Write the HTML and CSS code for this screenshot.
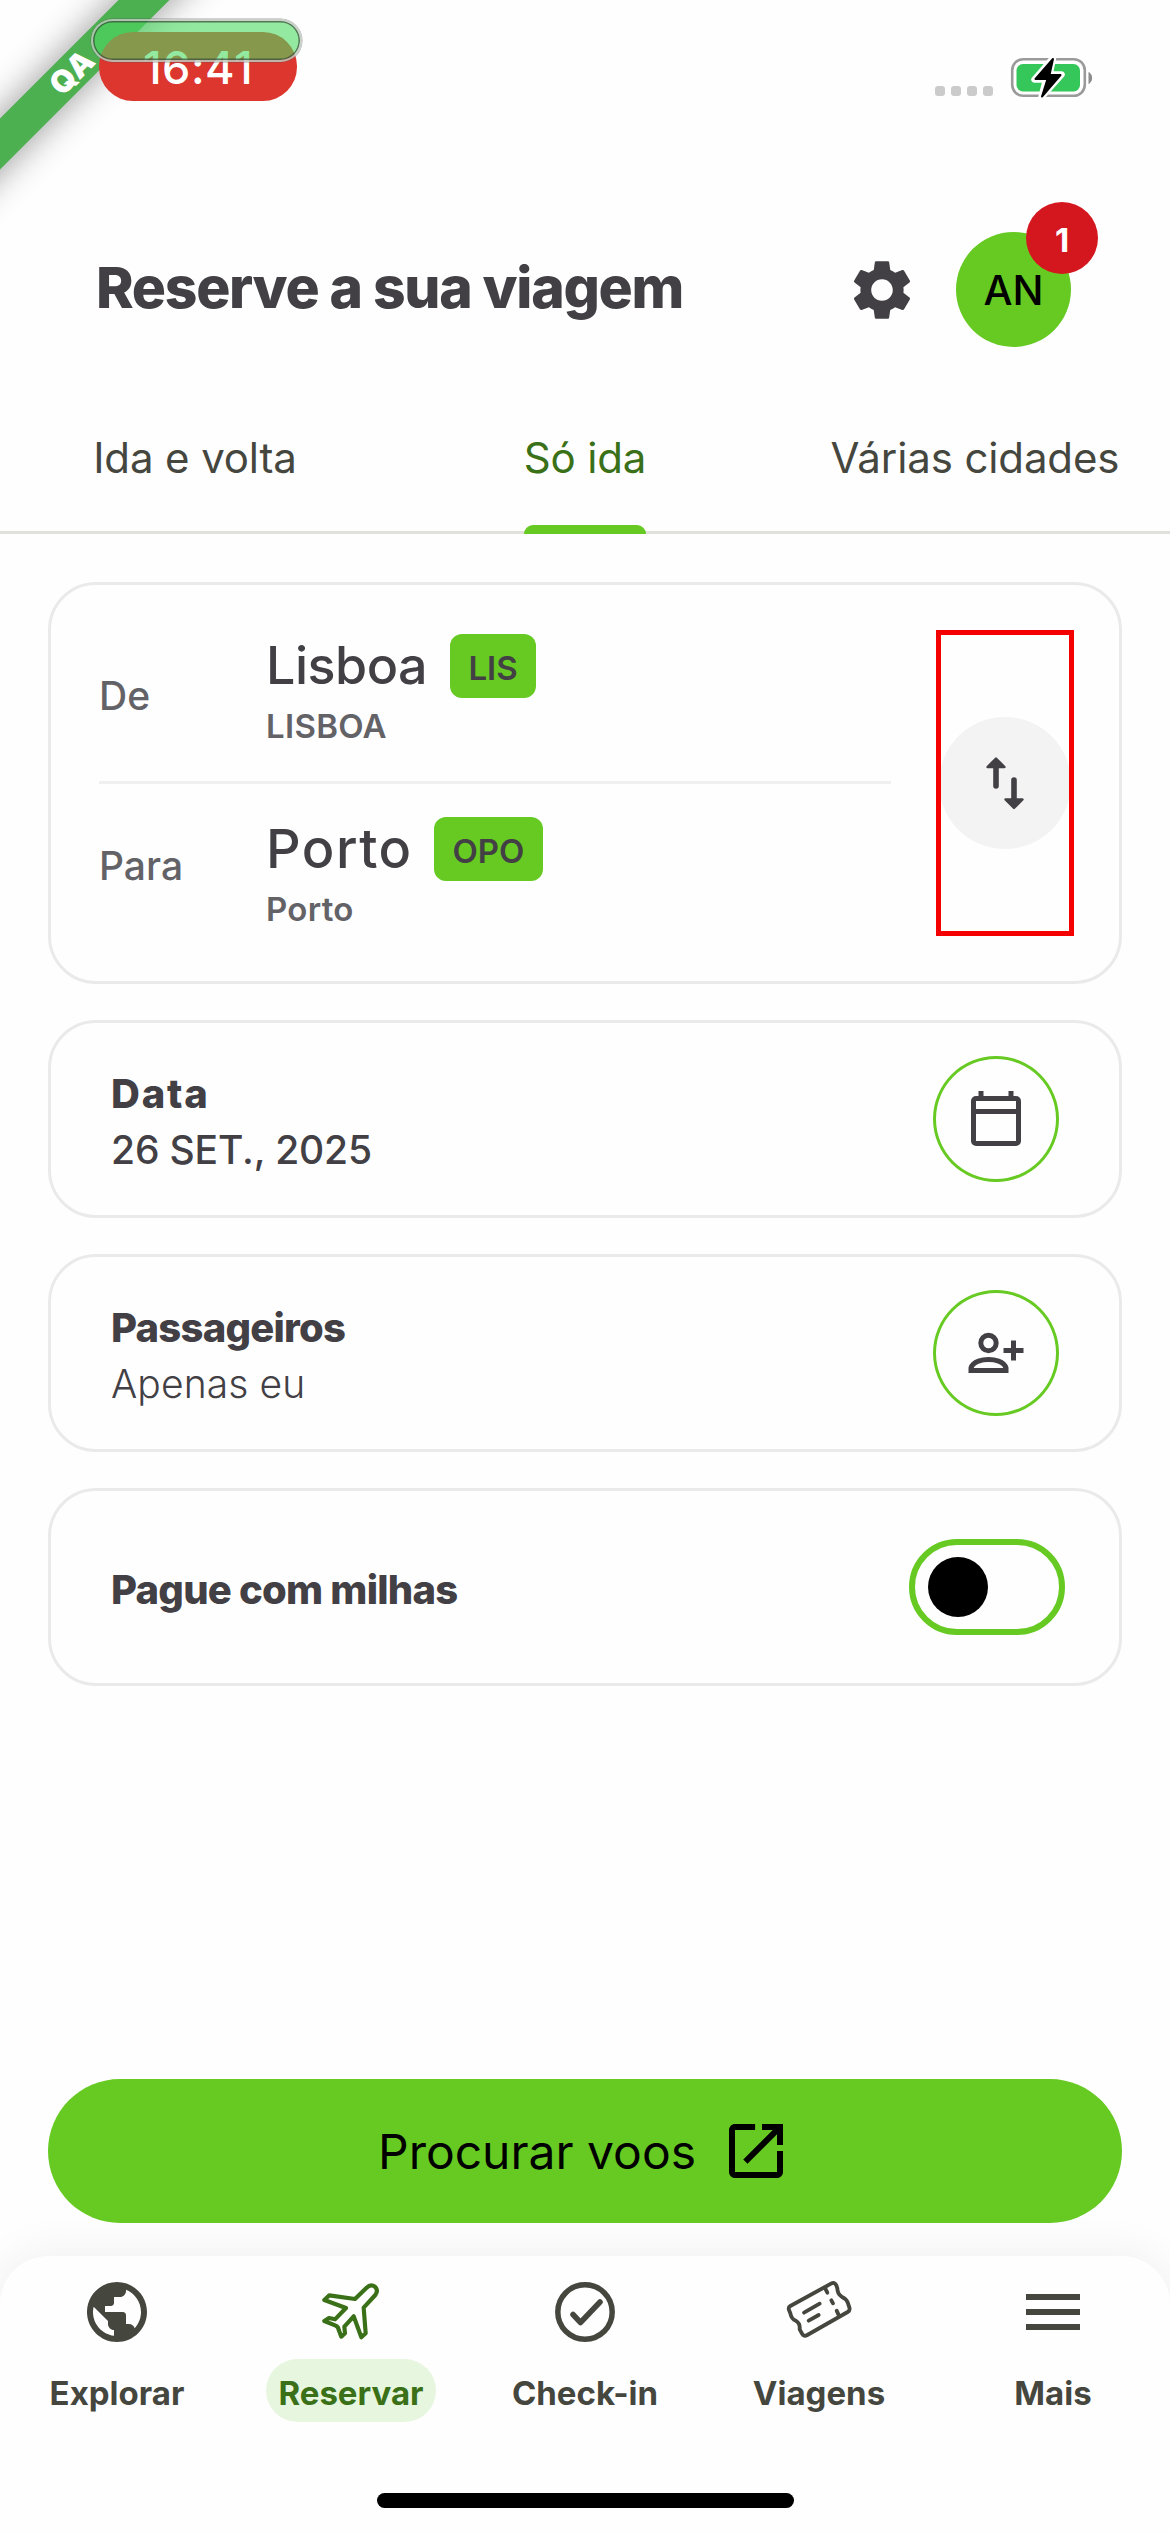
FILE: index.html
```html
<!DOCTYPE html>
<html lang="pt">
<head>
<meta charset="utf-8">
<title>Reserve a sua viagem</title>
<link rel="stylesheet" href="styles.css">
</head>
<body>
<div class="screen">
  <div class="ribbon">QA</div>

  <div class="status-bar">
    <div class="time-pill">16:41</div>
    <div class="glass-pill"></div>
    <div class="status-icons">
      <div class="dots"><i></i><i></i><i></i><i></i></div>
      <svg class="battery" width="84" height="44" viewBox="0 0 84 44">
        <rect x="2.2" y="4.2" width="72.6" height="36.6" rx="11" fill="none" stroke="#9a9a9a" stroke-width="2.6"/>
        <path d="M79 17.5a7 7 0 0 1 0 11z" fill="#8a8a8a" stroke="#8a8a8a"/>
        <rect x="6.5" y="9" width="63.5" height="27.5" rx="6.5" fill="#35c759"/>
        <path d="M43 3 24.500 24.500h11.500L31.500 42 51.500 19.500H39.500z" fill="#000" stroke="#fff" stroke-width="6.500" stroke-linejoin="round"/>
        <path d="M43 4 25.500 24h12L32 41.500 50.500 20H39.500z" fill="#000" stroke="#000" stroke-width="2" stroke-linejoin="round"/>
      </svg>
    </div>
  </div>

  <header class="header">
    <h1 class="title">Reserve a sua viagem</h1>
    <svg class="gear" width="72" height="72" viewBox="0 0 24 24"><path fill="#424045" d="M19.14 12.94c.04-.3.06-.61.06-.94 0-.32-.02-.64-.07-.94l2.030-1.580c.18-.14.23-.41.12-.61l-1.920-3.320c-.12-.22-.37-.29-.59-.22l-2.390.96c-.5-.38-1.030-.7-1.620-.94l-.36-2.540c-.04-.24-.24-.41-.48-.41h-3.840c-.24 0-.43.17-.47.41l-.36 2.540c-.59.24-1.130.57-1.620.94l-2.390-.96c-.22-.08-.47 0-.59.22L2.740 8.870c-.12.21-.08.47.12.61l2.030 1.580c-.05.3-.09.63-.09.94s.02.64.07.94l-2.030 1.580c-.18.14-.23.41-.12.61l1.920 3.320c.12.22.37.29.59.22l2.390-.96c.5.38 1.030.7 1.620.94l.36 2.540c.05.24.24.41.48.41h3.840c.24 0 .44-.17.47-.41l.36-2.540c.59-.24 1.130-.56 1.620-.94l2.390.96c.22.08.47 0 .59-.22l1.920-3.320c.12-.22.07-.47-.12-.61l-2.010-1.580zM12 15.600c-1.980 0-3.600-1.620-3.600-3.600s1.620-3.600 3.600-3.600 3.600 1.620 3.600 3.600-1.620 3.600-3.600 3.600z"/></svg>
    <div class="avatar">AN<span class="badge">1</span></div>
  </header>

  <nav class="tabs">
    <div class="tab">Ida e volta</div>
    <div class="tab active"><span>Só ida</span></div>
    <div class="tab">Várias cidades</div>
  </nav>

  <main class="content">
    <section class="card route">
      <div class="stops">
        <div class="stop from">
          <span class="label">De</span>
          <div class="place">
            <div class="city"><b class="lisboa">Lisboa</b><span class="code">LIS</span></div>
            <div class="airport">LISBOA</div>
          </div>
        </div>
        <div class="stop to">
          <span class="label">Para</span>
          <div class="place">
            <div class="city"><b class="porto">Porto</b><span class="code">OPO</span></div>
            <div class="airport">Porto</div>
          </div>
        </div>
      </div>
      <div class="swap">
        <svg width="132" height="132" viewBox="0 0 132 132">
          <circle cx="66" cy="66" r="66" fill="#f3f3f3"/>
          <g fill="#424045" stroke="#424045" stroke-linecap="round" stroke-linejoin="round">
            <path d="M57 48v21M75 63v21" stroke-width="5.600"/>
            <path d="M57 41.500l8.500 8.500h-17zM75 91l8.500-8.500h-17z" stroke-width="2.400"/>
          </g>
        </svg>
      </div>
    </section>

    <section class="card row">
      <div class="text"><div class="name data">Data</div><div class="value">26 SET., 2025</div></div>
      <div class="round">
        <svg width="126" height="126" viewBox="0 0 126 126"><g fill="none" stroke="#424045" stroke-width="5"><rect x="40.500" y="42.500" width="45" height="45" rx="2.500"/><path d="M40.500 55.500h45M48 35v6M78 35v6"/></g></svg>
      </div>
    </section>

    <section class="card row">
      <div class="text"><div class="name">Passageiros</div><div class="value light">Apenas eu</div></div>
      <div class="round">
        <svg width="126" height="126" viewBox="0 0 126 126"><g fill="none" stroke="#424045" stroke-width="5"><circle cx="55.500" cy="53" r="7.700"/><path d="M38 80.500V78C40 71 50 69.500 55.500 69.500S71 71 73 78v2.500zM80.500 50.500v20M70.500 60.500h20"/></g></svg>
      </div>
    </section>

    <section class="card row">
      <div class="text single"><div class="name">Pague com milhas</div></div>
      <div class="toggle"><div class="knob"></div></div>
    </section>
  </main>

  <button class="search">Procurar voos
    <svg width="72" height="72" viewBox="0 0 24 24"><path d="M19 19H5V5h6.700V3H5c-1.100 0-2 .9-2 2v14c0 1.100.9 2 2 2h14c1.100 0 2-.9 2-2v-7h-2v7zM14 3v2h3.600L7.760 14.830l1.410 1.410L19 6.410V10h2V3h-7z"/></svg>
  </button>

  <nav class="bottom">
    <div class="item">
      <svg width="72" height="72" viewBox="0 0 24 24"><path fill="currentColor" d="M12 2C6.480 2 2 6.480 2 12s4.480 10 10 10 10-4.480 10-10S17.520 2 12 2zm-1 17.930c-3.950-.49-7-3.850-7-7.930 0-.62.08-1.210.21-1.790L9 15v1c0 1.100.9 2 2 2v1.930zm6.900-2.540c-.26-.81-1-1.390-1.900-1.390h-1v-3c0-.55-.45-1-1-1H8v-2h2c.55 0 1-.45 1-1V7h2c1.100 0 2-.9 2-2v-.41c2.930 1.190 5 4.060 5 7.410 0 2.080-.8 3.970-2.100 5.390z"/></svg>
      <span>Explorar</span>
    </div>
    <div class="item current">
      <svg width="72" height="72" viewBox="15 18 216 216"><path fill="none" stroke="currentColor" stroke-width="12.500" stroke-linejoin="round" d="M135 87 58 76 43 90l65 24-33 34-18-4-14 9 34 14q8 4 9 12l8 21 11-10-2-20 28-31 23 63 13-12-6-77 35-38q10-14-1-25-13-9-26 4z"/></svg>
      <span>Reservar</span>
    </div>
    <div class="item">
      <svg width="72" height="72" viewBox="0 0 72 72"><g fill="none" stroke="currentColor" stroke-width="5.500" stroke-linecap="round" stroke-linejoin="round"><circle cx="36" cy="36" r="27.200"/><path d="M24 38.500l7.500 8 19.500-20.500"/></g></svg>
      <span>Check-in</span>
    </div>
    <div class="item">
      <svg width="72" height="72" viewBox="24 18 216 216"><g fill="none" stroke="currentColor" stroke-width="11.500" stroke-linecap="round" stroke-linejoin="round"><path d="M46 108 168 41q11-6 16 5l3 9q0 17 13 25 13 6 18 17l5 15q3 9-5 14L97 195q-11 6-16-4l-7-13q2-18-12-26-12-4-16-22l-4-10q-3-8 4-12z"/><path d="M151 56l6 12M169 91l5 9M185 122l5 11M87 128l47-27M101 152l30-17"/></g></svg>
      <span>Viagens</span>
    </div>
    <div class="item">
      <svg width="72" height="72" viewBox="0 0 24 24"><path fill="currentColor" d="M3 18h18v-2H3v2zm0-5h18v-2H3v2zm0-7v2h18V6H3z"/></svg>
      <span>Mais</span>
    </div>
    <div class="home"></div>
  </nav>
</div>
</body>
</html>
```
FILE: styles.css
```css
* { box-sizing: border-box; }
body { margin: 0; }
svg { display: block; flex: none; }

.screen {
  position: relative;
  display: flex;
  flex-direction: column;
  width: 1170px;
  height: 2532px;
  overflow: hidden;
  background: #fefefe;
  color: #424045;
  font-family: Inter, sans-serif;
}

/* environment ribbon across the corner */
.ribbon {
  position: absolute;
  left: -128px;
  top: 54px;
  width: 400px;
  height: 36px;
  background: #4caf50;
  color: #fff;
  font-size: 31px;
  font-weight: 900;
  line-height: 36px;
  text-align: center;
  letter-spacing: 1px;
  transform: rotate(-45deg);
  box-shadow: 0 0 36px rgba(0, 0, 0, .42);
}

.status-bar {
  position: relative;
  display: flex;
  justify-content: space-between;
  height: 231px;
  padding: 32px 76px 0 99px;
}
.time-pill {
  width: 198px;
  height: 69px;
  border-radius: 34px;
  background: #dc362e;
  color: #fff;
  font-size: 45px;
  font-weight: 500;
  line-height: 71px;
  text-align: center;
  letter-spacing: .5px;
}
.glass-pill {
  position: absolute;
  left: 91px;
  top: 19px;
  width: 211px;
  height: 43px;
  border: 2px solid rgba(190, 200, 190, .85);
  border-radius: 22px;
  background: rgba(77, 218, 97, .6);
  background-clip: padding-box;
  box-shadow: inset 0 0 0 1.5px rgba(60, 80, 60, .75), 0 0 0 .5px rgba(80, 80, 80, .5);
}
.status-icons {
  display: flex;
  gap: 17px;
  padding-top: 23px;
}
.dots {
  display: flex;
  gap: 6px;
  padding-top: 31px;
}
.dots i {
  width: 10px;
  height: 10px;
  border-radius: 3px;
  background: #cbcbcb;
}

.header {
  display: flex;
  align-items: center;
  height: 116px;
  padding: 0 99px 0 96px;
}
.title {
  flex: 1;
  margin: 0;
  padding-bottom: 3px;
  font-size: 57px;
  font-weight: 800;
  letter-spacing: -1.3px;
  line-height: 70px;
}
.gear { margin-top: 2px; }
.avatar {
  position: relative;
  width: 115px;
  height: 115px;
  margin-left: 38px;
  border-radius: 50%;
  background: #66ca22;
  color: #000;
  font-size: 41px;
  font-weight: 500;
  line-height: 116px;
  text-align: center;
}
.badge {
  position: absolute;
  left: 70px;
  top: -30px;
  width: 72px;
  height: 72px;
  border-radius: 50%;
  background: #d4171f;
  color: #fff;
  font-size: 33px;
  font-weight: 700;
  line-height: 76px;
}

.tabs {
  display: grid;
  grid-template-columns: repeat(3, 1fr);
  height: 150px;
  margin-top: 37px;
  border-bottom: 3px solid #e1e1dc;
}
.tab {
  color: #45473f;
  font-size: 42px;
  line-height: 148px;
  text-align: center;
  letter-spacing: -.12px;
}
.tab.active { color: #3a7017; }
.tab.active span {
  display: inline-block;
  position: relative;
  height: 150px;
}
.tab.active span::after {
  content: "";
  position: absolute;
  left: 0;
  right: 0;
  bottom: 0;
  height: 9px;
  border-radius: 9px 9px 0 0;
  background: #66ca22;
}

.content {
  display: flex;
  flex-direction: column;
  gap: 36px;
  padding: 48px;
}
.card {
  display: flex;
  justify-content: space-between;
  border: 3px solid #eaeaea;
  border-radius: 48px;
}
.route {
  height: 402px;
  padding: 45px 45px 0 48px;
}
.stops { width: 792px; }
.stop { display: flex; }
.from {
  height: 154px;
  padding-top: 4px;
  border-bottom: 3px solid #f0f0f0;
}
.to { padding-top: 33px; }
.label {
  width: 167px;
  padding-top: 37px;
  color: #636267;
  font-size: 39px;
  font-weight: 500;
  line-height: 50px;
}
.to .label { padding-top: 24px; }
.city {
  display: flex;
  align-items: center;
  gap: 23px;
  height: 64px;
}
.city b {
  font-size: 52px;
  font-weight: 500;
  line-height: 62px;
}
.lisboa { letter-spacing: -.5px; }
.city .porto {
  margin-right: -1.6px;
  font-size: 54px;
  letter-spacing: 1.5px;
}
.code {
  height: 64px;
  padding: 2px 18.3px 0;
  border-radius: 12px;
  background: #66ca22;
  font-size: 33px;
  font-weight: 600;
  line-height: 64px;
}
.airport {
  margin-top: 6px;
  color: #636267;
  font-size: 33px;
  font-weight: 600;
  line-height: 44px;
  letter-spacing: .3px;
}

.swap {
  position: relative;
  display: flex;
  align-items: center;
  justify-content: center;
  width: 138px;
  height: 306px;
}
.swap::after {
  content: "";
  position: absolute;
  inset: 0;
  border: 5px solid #f50000;
}

.row {
  align-items: center;
  height: 198px;
  padding: 0 60px;
}
.text { padding-top: 4px; }
.name {
  font-size: 40px;
  font-weight: 800;
  line-height: 57px;
  letter-spacing: -.77px;
}
.name.data { letter-spacing: 1.8px; }
.value {
  font-size: 39px;
  font-weight: 500;
  line-height: 56px;
  letter-spacing: -.15px;
}
.value.light {
  font-weight: 300;
  letter-spacing: .1px;
}
.round {
  width: 126px;
  height: 126px;
  border-radius: 50%;
  box-shadow: inset 0 0 0 3px #66ca22;
}
.toggle {
  display: flex;
  align-items: center;
  width: 156px;
  height: 96px;
  margin-right: -6px;
  padding-left: 13px;
  border: 6px solid #66ca22;
  border-radius: 48px;
}
.knob {
  width: 60px;
  height: 60px;
  border-radius: 50%;
  background: #000;
}

.search {
  position: relative;
  z-index: 1;
  display: flex;
  align-items: center;
  justify-content: center;
  gap: 24px;
  height: 144px;
  margin: auto 48px 33px;
  padding: 0;
  border: 0;
  border-radius: 72px;
  background: #66ca22;
  color: #000;
  font: 400 48px Inter, sans-serif;
}

.bottom {
  display: grid;
  grid-template-columns: repeat(5, 1fr);
  grid-template-rows: 1fr auto;
  height: 276px;
  padding: 20px 0 24px;
  border-radius: 48px 48px 0 0;
  background: #fefefe;
  box-shadow: 0 0 48px rgba(0, 0, 0, .07);
}
.item {
  display: flex;
  flex-direction: column;
  align-items: center;
  gap: 11px;
  color: #45473f;
}
.item span {
  height: 63px;
  padding: 2px 12px 0;
  border-radius: 32px;
  font-size: 33px;
  font-weight: 700;
  line-height: 64px;
}
.current { color: #3a7017; }
.current span { background: #e7f6df; }
.home {
  grid-column: 1 / -1;
  justify-self: center;
  width: 417px;
  height: 15px;
  border-radius: 8px;
  background: #000;
}
```
